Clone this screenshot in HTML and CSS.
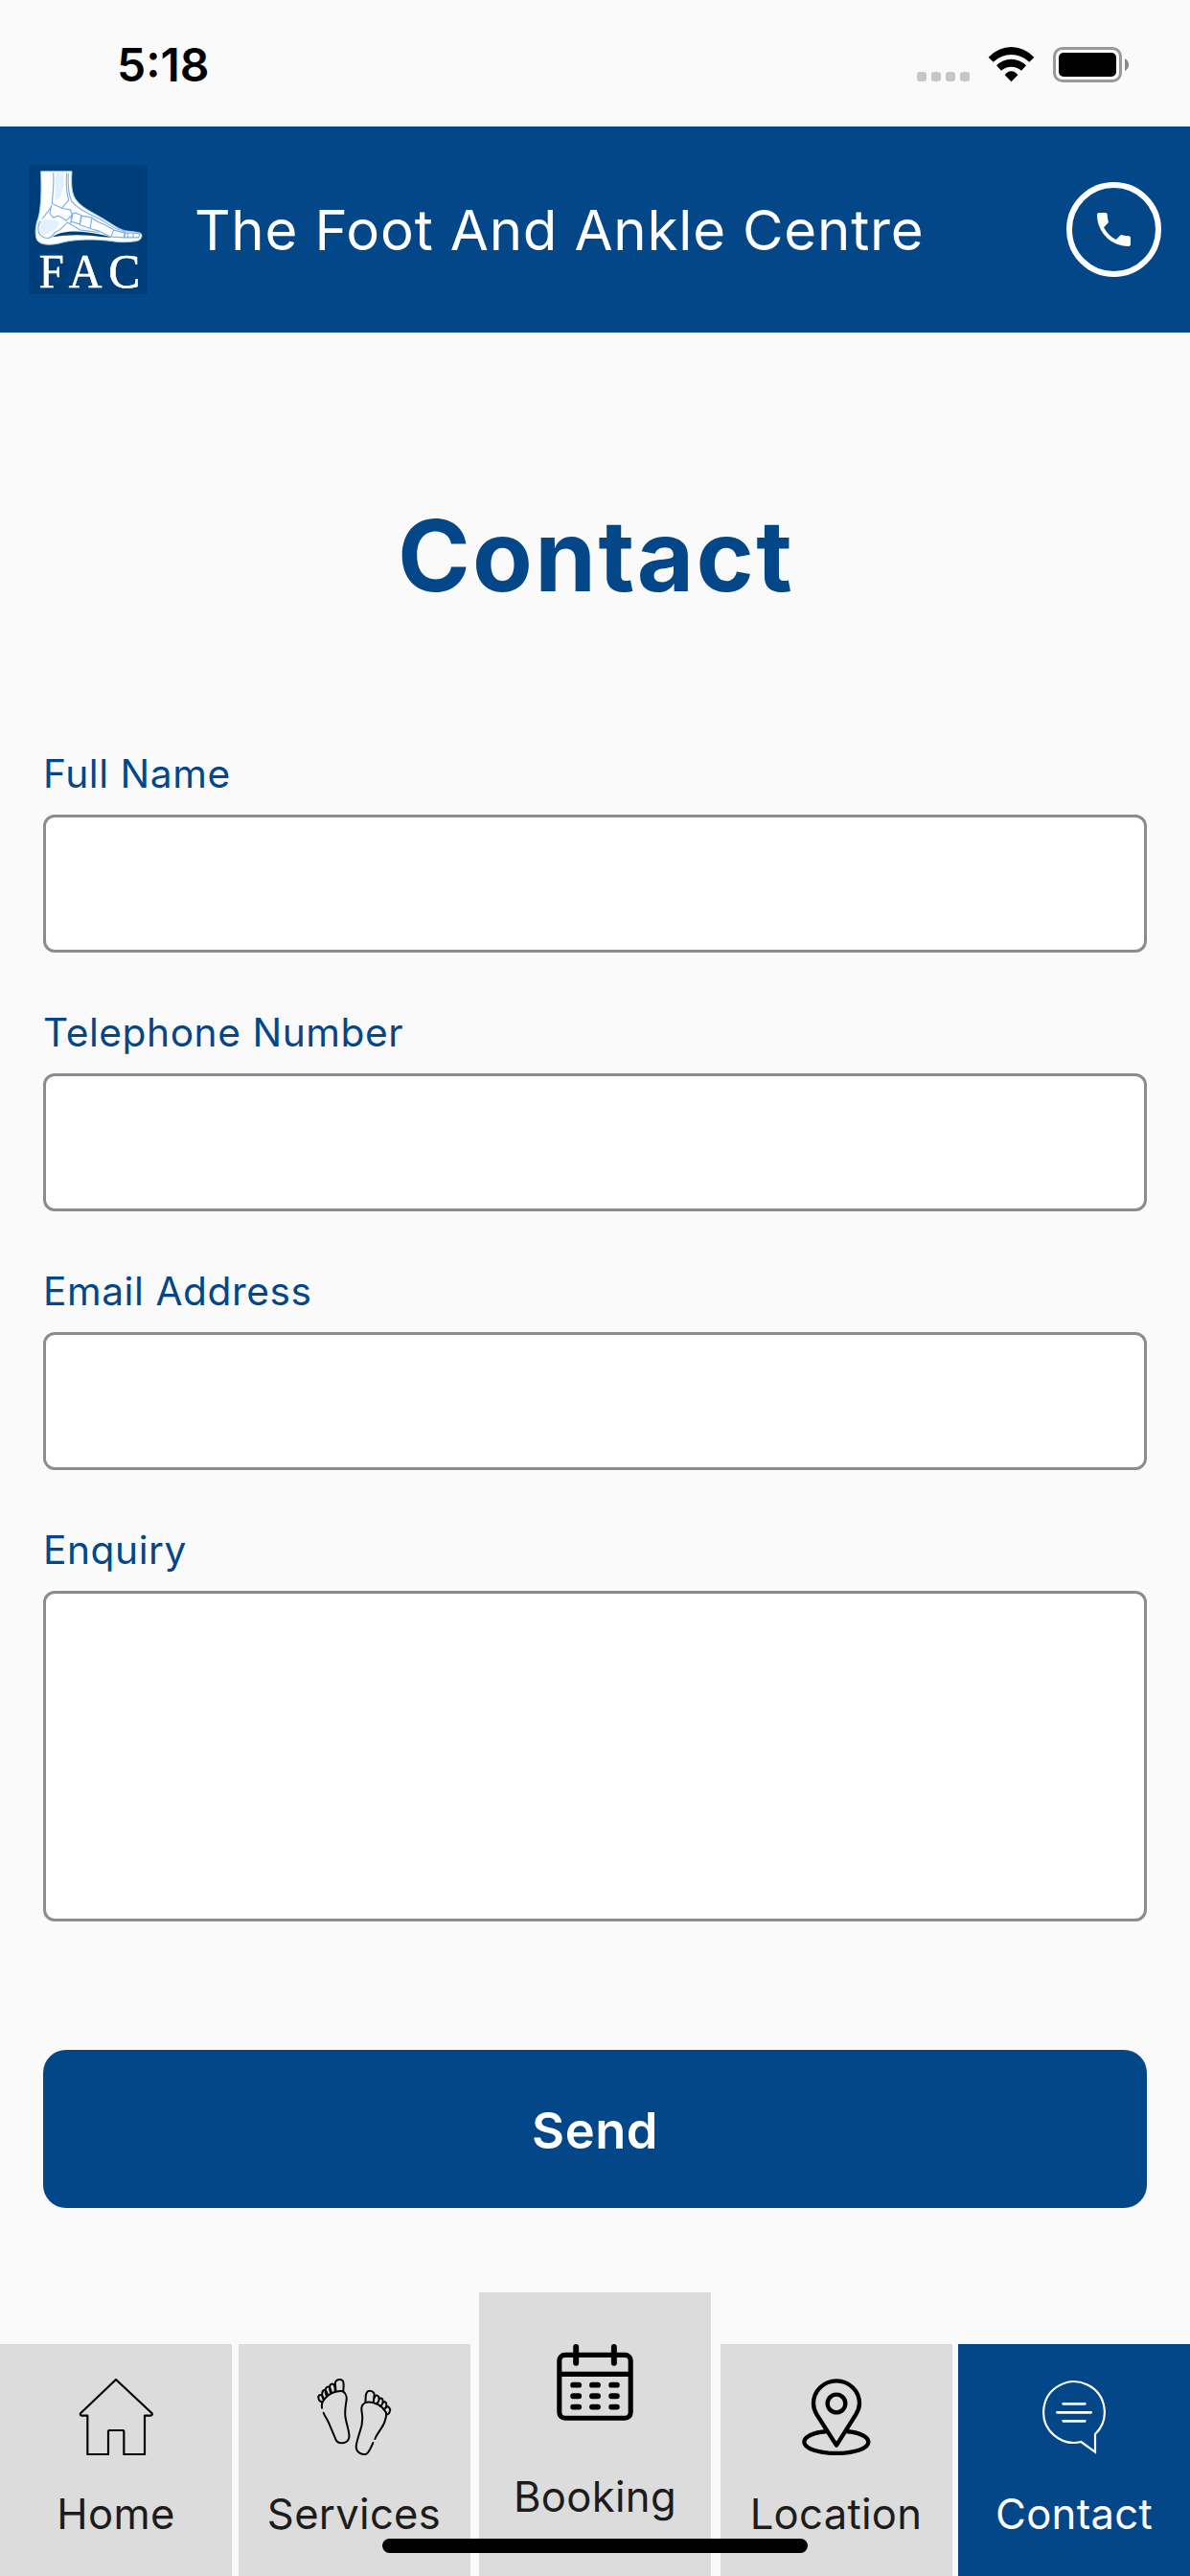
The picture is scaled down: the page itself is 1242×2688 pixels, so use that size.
FILE: index.html
```html
<!DOCTYPE html>
<html lang="en">
<head>
<meta charset="utf-8">
<title>The Foot And Ankle Centre - Contact</title>
<link rel="stylesheet" href="styles.css">
</head>
<body>
<div class="screen">
  <div class="status-bar">
    <span class="time">5:18</span>
    <svg class="status-icons" viewBox="171 147 663 111">
      <g fill="#c6c6c6">
        <rect x="171" y="225" width="30" height="30" rx="9"/>
        <rect x="216" y="225" width="30" height="30" rx="9"/>
        <rect x="261" y="225" width="30" height="30" rx="9"/>
        <rect x="306" y="225" width="30" height="30" rx="9"/>
      </g>
      <path d="M395 179Q427 147 466.500 147Q506 147 538 179L523 194Q498 171 466.500 171Q435 171 410 194Z"/>
      <path d="M420 205Q440 185 466.500 185Q493 185 513 205L498 221Q484 209 466.500 209Q449 209 435 221Z"/>
      <path d="M446 235Q455 223 466.500 223Q478 223 487 235L466.500 256Z"/>
      <rect x="601.500" y="151.500" width="207" height="102" rx="25" fill="none" stroke="#999" stroke-width="9"/>
      <rect x="615" y="165" width="180" height="75" rx="15"/>
      <path d="M822 183Q834 189 834 202.500Q834 216 822 222Z" fill="#8a8a8a"/>
    </svg>
  </div>

  <header class="app-header">
    <svg class="logo" viewBox="30 37 372 404">
      <rect x="30" y="37" width="372" height="404" fill="#003e79"/>
      <path fill="#fff" stroke="#a9cdf2" stroke-width="3" d="M68 57H165C163 95 163 122 176 143C192 168 226 184 258 202C288 220 308 236 332 243L374 248Q385 251 384 258C383 269 376 275 362 276C338 279 315 280 294 276C240 268 175 269 134 280C98 290 66 288 56 272C48 256 51 225 60 202C69 170 70 115 68 57Z"/>
      <path fill="#003e79" d="M104 262C130 244 170 243 208 247C240 250 268 256 290 264L262 262C210 254 150 254 104 262Z"/>
      <path fill="#e3f0fd" d="M66 212Q92 202 126 216Q116 250 72 256Q58 236 66 212ZM113 62H140V100L128 140L113 148Z"/>
      <g fill="none" stroke="#78b2e8" stroke-width="3.500" stroke-linejoin="round">
        <path d="M107 62C110 96 105 126 103 158L134 172L155 148C148 120 146 94 149 62M154 64C152 100 155 130 164 150C184 175 218 190 254 207C282 224 300 240 334 246"/>
        <path d="M101 162L96 188L106 202L124 196L148 211L166 192L160 177L134 173M72 206L101 168M66 212C52 240 62 264 88 266C106 266 102 254 114 247C132 240 140 226 152 216"/>
        <path d="M167 190L176 187L194 194L190 222L163 214Q160 202 167 190ZM196 196L228 202L222 236L190 224ZM228 203C240 212 250 218 268 224L296 240L288 262L250 244L222 236M168 192L160 222M150 216L190 240L250 248M296 241L330 249L328 264L290 262M332 250H358L356 264H330ZM360 250L378 252L374 264H358M340 250V264"/>
      </g>
      <g class="logo-text">
        <text x="62" y="420" textLength="78" lengthAdjust="spacingAndGlyphs">F</text>
        <text x="155" y="420" textLength="104" lengthAdjust="spacingAndGlyphs">A</text>
        <text x="280" y="420" textLength="99" lengthAdjust="spacingAndGlyphs">C</text>
      </g>
    </svg>
    <div class="app-title">The Foot And Ankle Centre</div>
    <a class="call-button" aria-label="Call">
      <svg class="call-icon" viewBox="3 3 18 18"><path fill="#fff" d="M6.620 10.790c1.440 2.830 3.760 5.140 6.590 6.590l2.200-2.200c.27-.27.670-.36 1.020-.24 1.120.37 2.330.57 3.570.57.55 0 1 .45 1 1V20c0 .55-.45 1-1 1-9.390 0-17-7.610-17-17 0-.55.45-1 1-1h3.500c.55 0 1 .45 1 1 0 1.250.2 2.450.57 3.570.11.35.03.74-.25 1.020l-2.200 2.200z"/></svg>
    </a>
  </header>

  <main class="content">
    <h1 class="page-title">Contact</h1>
    <form class="contact-form">
      <div class="field"><label class="label" for="name">Full Name</label><input class="input" id="name" type="text"></div>
      <div class="field"><label class="label" for="phone">Telephone Number</label><input class="input" id="phone" type="tel"></div>
      <div class="field"><label class="label" for="email">Email Address</label><input class="input" id="email" type="email"></div>
      <div class="field"><label class="label" for="enquiry">Enquiry</label><textarea class="input input-tall" id="enquiry"></textarea></div>
      <button class="send" type="button">Send</button>
    </form>
  </main>

  <nav class="tab-bar">
    <a class="tab">
      <svg class="tab-icon" viewBox="243 306 240 240" fill="none" stroke="#000" stroke-width="6.500" stroke-linejoin="round"><path d="M363 309L252 415Q250 421 256 422H274V543H339V471Q339 468 342 468H385Q388 468 388 471V543H453V422H471Q478 421 476 415Z"/></svg>
      <span class="tab-label">Home</span>
    </a>
    <a class="tab">
      <svg class="tab-icon" viewBox="30 36 240 240" fill="none" stroke="#000" stroke-width="6" stroke-linecap="round">
        <path d="M91 74C92 62 87 52 91 45C96 37 110 37 114 44C118 53 115 62 115 75"/>
        <path d="M48 128C47 120 47 114 51 107C60 93 76 80 91 77C100 75 110 73 115 77C128 86 126 100 123 115C120 135 119 150 123 165C127 185 135 205 133 220C129 242 98 243 91 226C85 211 78 195 70 176C63 160 56 153 53 143"/>
        <path d="M75 80C70 66 72 54 78 53C86 51 90 62 89 74M62 88C56 76 59 64 65 62C72 60 76 70 77 79M52 100C46 88 48 75 54 72C61 70 65 80 65 88M47 109C37 107 34 92 40 88C47 84 53 92 53 101"/>
        <path d="M184 110C186 98 183 88 188 80C193 72 206 73 211 82C214 90 209 98 210 110"/>
        <path d="M214 225C222 205 238 190 244 172C248 160 252 150 248 141C240 126 228 117 213 113C204 110 192 109 184 111C170 119 171 130 173 142C177 165 174 185 166 205C160 225 155 240 155 250C157 270 175 275 187 272C196 268 202 252 208 237"/>
        <path d="M212 96C214 86 223 86 226 94C229 102 225 112 219 114M226 103C230 94 238 97 239 105C239 112 236 120 230 122M238 113C243 105 251 110 250 118C250 126 246 131 241 132M250 126C255 120 263 129 261 137C260 144 254 150 249 149"/>
      </svg>
      <span class="tab-label">Services</span>
    </a>
    <a class="tab tab-raised">
      <svg class="tab-icon" viewBox="543 198 240 242" fill="none" stroke="#000" stroke-width="15.500" stroke-linecap="round">
        <rect x="550.500" y="232.500" width="225" height="199" rx="18"/>
        <path stroke-linecap="butt" d="M551 293H776"/>
        <path stroke-width="18" d="M603 207V258M723 207V258M594 327H612M654 327H672M715 327H732M594 362H612M654 362H672M715 362H732M594 396.500H612M654 396.500H672M715 396.500H732"/>
      </svg>
      <span class="tab-label">Booking</span>
    </a>
    <a class="tab">
      <svg class="tab-icon" viewBox="38 306 240 240" fill="none" stroke="#000" stroke-width="13">
        <circle cx="158" cy="384" r="28"/>
        <path stroke-linejoin="round" d="M158 515L96 418C88 405 86 395 86 384A72 71 0 0 1 230 384C230 395 227 405 219 418Z"/>
        <path d="M128 471C85 475 57 488 57 505C57 526 105 540 158 540C211 540 258 526 258 505C258 488 230 475 190 471"/>
      </svg>
      <span class="tab-label">Location</span>
    </a>
    <a class="tab tab-active">
      <svg class="tab-icon" viewBox="783 306 240 240" fill="none" stroke="#fff" stroke-width="6.500">
        <path d="M969 480A95.500 95.500 0 1 0 925 504L969 536Z"/>
        <path stroke-width="8" stroke-linecap="round" d="M869 385H937M850 412H956M869 439H937"/>
      </svg>
      <span class="tab-label">Contact</span>
    </a>
  </nav>
  <div class="home-indicator"></div>
</div>
</body>
</html>
```

FILE: styles.css
```css
* { box-sizing: border-box; }

body {
  margin: 0;
  background: #fafafa;
  font-family: Inter, "Liberation Sans", sans-serif;
  color: #044789;
}

.screen {
  position: relative;
  display: flex;
  flex-direction: column;
  width: 1242px;
  height: 2688px;
  overflow: hidden;
}

.status-bar {
  display: flex;
  align-items: center;
  justify-content: space-between;
  height: 132px;
  padding: 3px 64px 0 122px;
  color: #000;
}

.time {
  font-size: 48px;
  font-weight: 600;
  line-height: 56px;
}

.status-icons { width: 221px; height: 37px; }

.app-header {
  display: flex;
  align-items: center;
  height: 215px;
  padding: 0 30px;
  background: #044789;
}

.logo {
  width: 124px;
  height: 135px;
  overflow: visible;
}

.logo-text {
  fill: #fff;
  stroke: #fff;
  stroke-width: 2;
  font-family: "Liberation Serif", serif;
  font-size: 151px;
}

.app-title {
  flex: 1;
  margin-left: 49px;
  color: #fff;
  font-size: 58.2px;
  line-height: 70px;
  letter-spacing: 0.8px;
  white-space: nowrap;
}

.call-button {
  display: flex;
  align-items: center;
  justify-content: center;
  width: 99px;
  height: 99px;
  border: 6px solid #fff;
  border-radius: 50%;
}

.call-icon { width: 35px; height: 35px; }

.content {
  height: 2045px;
  padding: 173px 45px 0;
}

.page-title {
  margin: 0;
  padding-left: 2px;
  font-size: 102.5px;
  font-weight: 700;
  line-height: 120px;
  letter-spacing: 2.3px;
  text-align: center;
}

.contact-form {
  display: flex;
  flex-direction: column;
  gap: 59px;
  margin-top: 143px;
}

.field {
  display: flex;
  flex-direction: column;
  gap: 17px;
}

.label {
  font-size: 40.7px;
  line-height: 50px;
  letter-spacing: 0.55px;
}

.input {
  width: 100%;
  height: 144px;
  padding: 0 30px;
  border: 3px solid #8c8c8c;
  border-radius: 12px;
  outline: none;
  background: #fff;
  font: inherit;
  font-size: 42px;
  resize: none;
}

.input-tall { height: 345px; }

.send {
  height: 165px;
  margin-top: 75px;
  padding: 2px 0 0;
  border: 0;
  border-radius: 24px;
  background: #044789;
  color: #fff;
  font-family: inherit;
  font-size: 52.4px;
  font-weight: 600;
  letter-spacing: 0.5px;
}

.tab-bar {
  display: flex;
  align-items: flex-end;
  justify-content: space-between;
  height: 296px;
}

.tab {
  display: flex;
  flex-direction: column;
  align-items: center;
  gap: 36px;
  width: 242px;
  height: 242px;
  padding-top: 36px;
  background: #dcdcdc;
  color: #1c1c1c;
}

.tab-raised {
  gap: 54px;
  height: 296px;
  margin: 0 3px;
  padding-top: 54px;
}

.tab-active {
  background: #044789;
  color: #fff;
}

.tab-icon {
  flex: none;
  width: 80px;
  height: 80px;
}

.tab-label {
  font-size: 43.6px;
  line-height: 52px;
  letter-spacing: 0.3px;
}

.home-indicator {
  position: absolute;
  bottom: 24px;
  left: 399px;
  width: 444px;
  height: 15px;
  border-radius: 8px;
  background: #000;
}
```
